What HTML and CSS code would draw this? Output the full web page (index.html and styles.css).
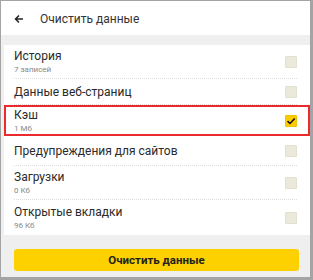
FILE: index.html
```html
<!DOCTYPE html>
<html lang="ru">
<head>
  <meta charset="UTF-8" />
  <title>Очистить данные</title>
  <link rel="stylesheet" href="styles.css">
</head>
<body>
  <div class="frame">
    <header class="topbar">
      <svg class="back" width="10" height="10" viewBox="0 0 10 10">
        <path d="M9 5H1.5M5 1.5L1.5 5L5 8.5" fill="none" stroke="#222" stroke-width="1.5"/>
      </svg>
      <h1>Очистить данные</h1>
    </header>

    <div class="list">
      <div class="row tall">
        <div class="text">
          <div class="label">История</div>
          <div class="sub">7 записей</div>
        </div>
        <span class="check"></span>
      </div>
      <div class="row">
        <div class="text">
          <div class="label">Данные веб-страниц</div>
        </div>
        <span class="check"></span>
      </div>
      <div class="row marked">
        <div class="text">
          <div class="label">Кэш</div>
          <div class="sub">1 Мб</div>
        </div>
        <span class="check on">
          <svg width="10" height="10" viewBox="0 0 10 10">
            <path d="M1.5 5.2L4 7.5L8.7 2.5" fill="none" stroke="#111" stroke-width="1.6"/>
          </svg>
        </span>
      </div>
      <div class="row mid">
        <div class="text">
          <div class="label">Предупреждения для сайтов</div>
        </div>
        <span class="check"></span>
      </div>
      <div class="row tall">
        <div class="text">
          <div class="label">Загрузки</div>
          <div class="sub">0 Кб</div>
        </div>
        <span class="check"></span>
      </div>
      <div class="row tall last">
        <div class="text">
          <div class="label">Открытые вкладки</div>
          <div class="sub">96 Кб</div>
        </div>
        <span class="check"></span>
      </div>
    </div>

    <div class="actions">
      <button class="clear-btn">Очистить данные</button>
    </div>
  </div>
</body>
</html>
```

FILE: styles.css
```css
* {
  box-sizing: border-box;
}

body {
  margin: 0;
  font-family: Roboto, "Noto Sans", sans-serif;
  color: #222;
}

.frame {
  width: 313px;
  height: 280px;
  border: 1px solid #a4a4a4;
  border-right-width: 3px;
  border-bottom-width: 3px;
  background: #efefef;
}

.topbar {
  height: 34px;
  background: #fff;
  display: flex;
  align-items: center;
  padding: 2px 0 0 13px;
}

.back {
  margin-right: 16px;
}

.topbar h1 {
  margin: 0;
  font-size: 12px;
  font-weight: 400;
  color: #333;
}

.list {
  margin: 10px 0 0 3px;
  background: #fff;
  padding: 0 13px 0 10px;
}

.row {
  display: flex;
  align-items: center;
  height: 26px;
  border-bottom: 1px dotted #dcdcdc;
}

.row.tall {
  height: 34px;
}

.row.mid {
  height: 30px;
}

.row.last {
  height: 35px;
  border-bottom: none;
}

.row.marked {
  height: 31px;
  margin: 0 -13px 0 -10px;
  padding: 0 11px 0 8px;
  border: 2px solid #ec2a2e;
}

.text {
  flex: 1;
}

.label {
  font-size: 12px;
  line-height: 16px;
  color: #2a2a2a;
}

.sub {
  font-size: 8px;
  line-height: 11px;
  color: #888;
}

.check {
  width: 12px;
  height: 12px;
  background: #ebe9da;
  border: 1px solid #e2e0cf;
  border-radius: 1px;
  display: flex;
  align-items: center;
  justify-content: center;
}

.check.on {
  background: #fdcc00;
  border-color: #f2c200;
}

.actions {
  padding: 14px 11px 0 13px;
}

.clear-btn {
  display: block;
  width: 100%;
  height: 22px;
  border: none;
  border-radius: 3px;
  background: #fdd000;
  font-family: inherit;
  font-size: 11.5px;
  font-weight: 700;
  color: #222;
}
```
